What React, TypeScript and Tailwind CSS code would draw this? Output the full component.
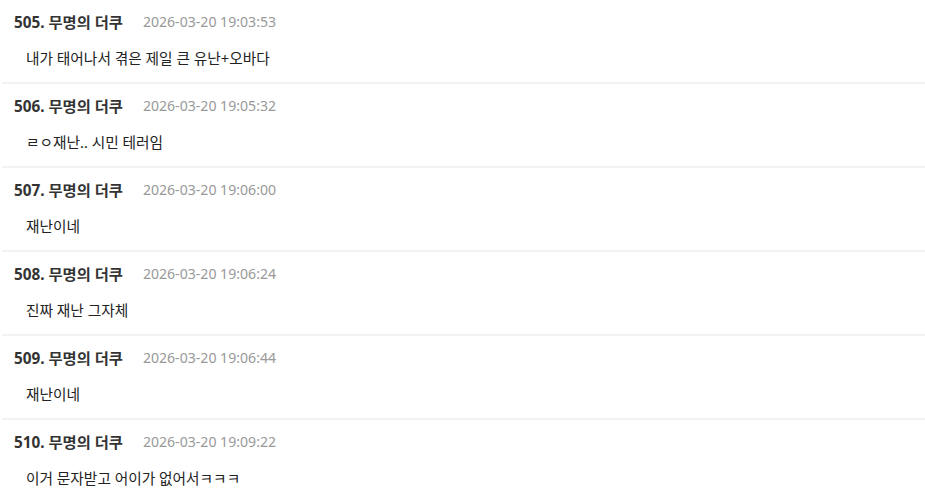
const comments = [
  { no: 505, date: "2026-03-20 19:03:53", text: "내가 태어나서 겪은 제일 큰 유난+오바다" },
  { no: 506, date: "2026-03-20 19:05:32", text: "ㄹㅇ재난.. 시민 테러임" },
  { no: 507, date: "2026-03-20 19:06:00", text: "재난이네" },
  { no: 508, date: "2026-03-20 19:06:24", text: "진짜 재난 그자체" },
  { no: 509, date: "2026-03-20 19:06:44", text: "재난이네" },
  { no: 510, date: "2026-03-20 19:09:22", text: "이거 문자받고 어이가 없어서ㅋㅋㅋ" },
];

export default function App() {
  return (
    <div
      className="min-h-screen bg-white pl-0.5"
      style={{ fontFamily: '"Noto Sans", "Noto Sans CJK KR", sans-serif' }}
    >
      <ul>
        {comments.map((c) => (
          <li key={c.no} className="border-b-2 border-[#f2f2f2] pt-3 pb-[14px] pl-3">
            <div className="flex items-center gap-5 h-5">
              <span className="text-[15.3px] font-bold text-[#333]">
                {c.no}. 무명의 더쿠
              </span>
              <span className="text-[14.1px] text-[#999]">{c.date}</span>
            </div>
            <p className="mt-4 pl-3 h-5 leading-5 text-[14.7px] text-[#222]">{c.text}</p>
          </li>
        ))}
      </ul>
    </div>
  );
}
